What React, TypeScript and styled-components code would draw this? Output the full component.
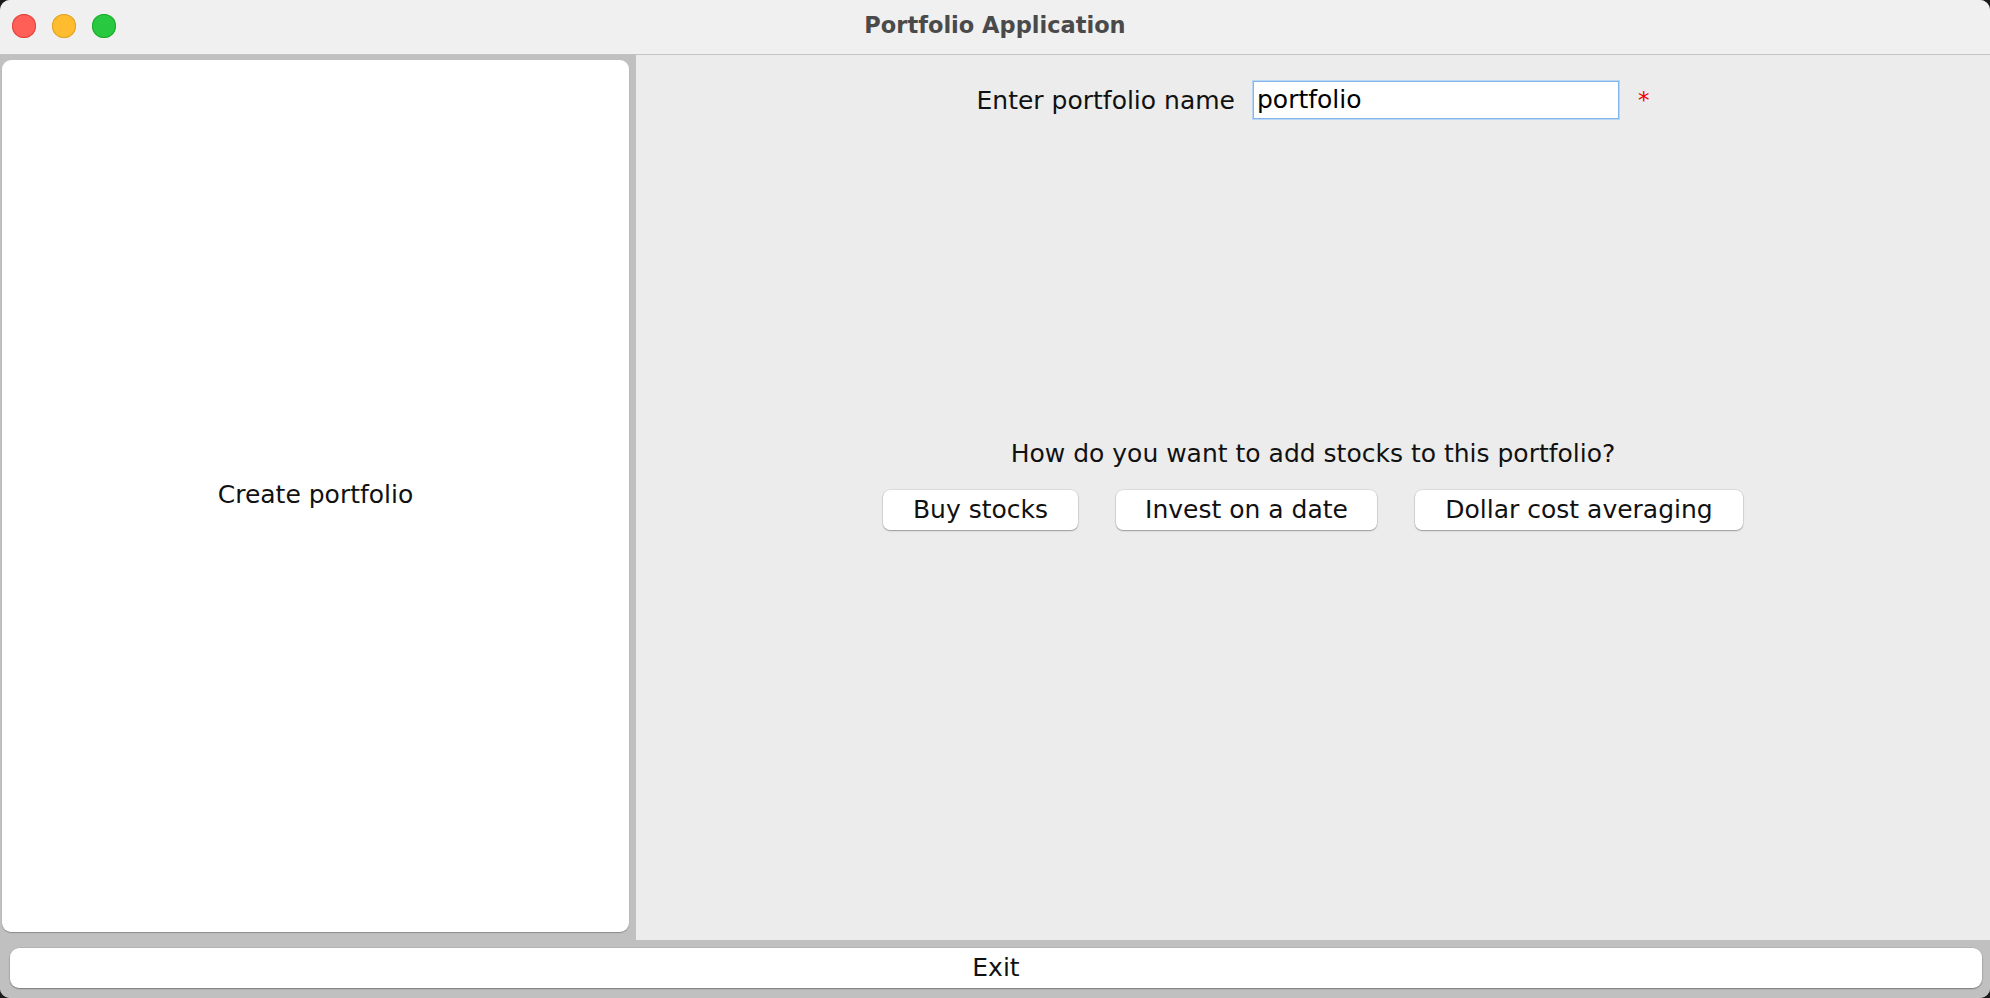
import React from "react";
import styled, { createGlobalStyle } from "styled-components";

const Global = createGlobalStyle`
  html, body { margin: 0; padding: 0; background: #1b1b1b; }
  body { width: 1990px; height: 998px; overflow: hidden; }
  * { box-sizing: border-box; }
`;

const Window = styled.div`
  width: 1990px;
  height: 998px;
  display: flex;
  flex-direction: column;
  border-radius: 10px;
  overflow: hidden;
  background: #c0c0c0;
  font-family: "DejaVu Sans", "Noto Sans", sans-serif;
  color: #111;
`;

const TitleBar = styled.div`
  height: 55px;
  flex: none;
  display: grid;
  grid-template-columns: 1fr auto 1fr;
  align-items: center;
  background: #f0f0f0;
  border-bottom: 1px solid #c4c4c4;
  padding: 0 0 2px 0;
`;

const Lights = styled.div`
  display: flex;
  gap: 16px;
  padding-left: 12px;
`;

const Light = styled.span<{ $c: string; $b: string }>`
  width: 24px;
  height: 24px;
  border-radius: 50%;
  background: ${(p) => p.$c};
  box-shadow: inset 0 0 0 1px ${(p) => p.$b};
`;

const Title = styled.div`
  font-family: "DejaVu Sans", "Liberation Sans", sans-serif;
  font-weight: 700;
  font-size: 22.5px;
  color: #4a4a4a;
  margin-top: -2px;
`;

const Body = styled.div`
  flex: 1;
  display: flex;
  min-height: 0;
`;

const Sidebar = styled.div`
  width: 636px;
  flex: none;
  background: #c0c0c0;
  padding: 5px 7px 8px 2px;
  display: flex;
`;

const Card = styled.div`
  flex: 1;
  background: #fff;
  border-radius: 9px;
  box-shadow: 0 1px 1px rgba(0, 0, 0, 0.28);
  display: flex;
  align-items: center;
  justify-content: center;
  font-size: 25px;
  padding-bottom: 4px;
`;

const Pane = styled.div`
  flex: 1;
  background: #ececec;
  display: flex;
  flex-direction: column;
  align-items: center;
  padding-top: 26px;
`;

const NameRow = styled.div`
  display: flex;
  align-items: center;
  gap: 18px;
  font-size: 25px;
`;

const NameInput = styled.input`
  width: 366px;
  height: 38px;
  border: 1px solid #82b6ea;
  box-shadow: 0 0 0 1px #b9d6f4;
  background: #fff;
  font-family: inherit;
  font-size: 25px;
  color: #000;
  padding: 0 3px 2px;
  outline: none;
`;

const Required = styled.span`
  color: #f00000;
  font-size: 23px;
  margin-left: 1px;
`;

const Question = styled.div`
  margin-top: 320px;
  font-size: 25px;
`;

const Choices = styled.div`
  margin-top: 22px;
  display: flex;
  gap: 38px;
`;

const Choice = styled.button<{ $w: number }>`
  width: ${(p) => p.$w}px;
  height: 40px;
  border: none;
  border-radius: 7px;
  background: #fff;
  box-shadow: 0 0 0 0.5px rgba(0, 0, 0, 0.12), 0 1px 1.5px rgba(0, 0, 0, 0.3);
  font-family: inherit;
  font-size: 25px;
  color: #111;
  padding: 0 0 2px;
`;

const Footer = styled.div`
  height: 58px;
  flex: none;
  background: #c0c0c0;
  padding: 8px 8px 10px 10px;
  display: flex;
`;

const ExitButton = styled.button`
  flex: 1;
  border: none;
  border-radius: 9px;
  background: #fff;
  box-shadow: 0 0 0 0.5px rgba(0, 0, 0, 0.1), 0 1px 1.5px rgba(0, 0, 0, 0.32);
  font-family: inherit;
  font-size: 25px;
  color: #111;
  padding: 0 0 2px;
`;

export default function App() {
  return (
    <>
      <Global />
      <Window>
        <TitleBar>
          <Lights>
            <Light $c="#ff5f57" $b="#e0443e" />
            <Light $c="#febc2e" $b="#dea123" />
            <Light $c="#28c840" $b="#1aab29" />
          </Lights>
          <Title>Portfolio Application</Title>
          <span />
        </TitleBar>
        <Body>
          <Sidebar>
            <Card>Create portfolio</Card>
          </Sidebar>
          <Pane>
            <NameRow>
              <span>Enter portfolio name</span>
              <NameInput defaultValue="portfolio" />
              <Required>*</Required>
            </NameRow>
            <Question>How do you want to add stocks to this portfolio?</Question>
            <Choices>
              <Choice $w={195}>Buy stocks</Choice>
              <Choice $w={261}>Invest on a date</Choice>
              <Choice $w={328}>Dollar cost averaging</Choice>
            </Choices>
          </Pane>
        </Body>
        <Footer>
          <ExitButton>Exit</ExitButton>
        </Footer>
      </Window>
    </>
  );
}
